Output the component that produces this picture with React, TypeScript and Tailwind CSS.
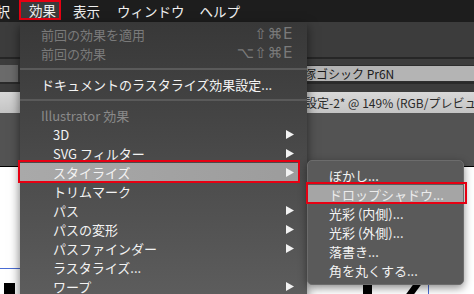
import React from "react";

type MenuItem =
  | { kind: "item"; label: string; shortcut?: string; disabled?: boolean; indent?: boolean; arrow?: boolean; active?: boolean }
  | { kind: "sep" }
  | { kind: "header"; label: string };

const effects: MenuItem[] = [
  { kind: "item", label: "前回の効果を適用", shortcut: "⇧⌘E", disabled: true },
  { kind: "item", label: "前回の効果", shortcut: "⌥⇧⌘E", disabled: true },
  { kind: "sep" },
  { kind: "item", label: "ドキュメントのラスタライズ効果設定..." },
  { kind: "sep" },
  { kind: "header", label: "Illustrator 効果" },
  { kind: "item", label: "3D", indent: true, arrow: true },
  { kind: "item", label: "SVG フィルター", indent: true, arrow: true },
  { kind: "item", label: "スタイライズ", indent: true, arrow: true, active: true },
  { kind: "item", label: "トリムマーク", indent: true },
  { kind: "item", label: "パス", indent: true, arrow: true },
  { kind: "item", label: "パスの変形", indent: true, arrow: true },
  { kind: "item", label: "パスファインダー", indent: true, arrow: true },
  { kind: "item", label: "ラスタライズ...", indent: true },
  { kind: "item", label: "ワープ", indent: true, arrow: true },
];

const stylize = ["ぼかし...", "ドロップシャドウ...", "光彩 (内側)...", "光彩 (外側)...", "落書き...", "角を丸くする..."];

const Arrow = () => (
  <svg width="8" height="9" viewBox="0 0 8 9" className="ml-auto shrink-0">
    <path d="M0 0L8 4.5L0 9Z" fill="#f2f2f2" />
  </svg>
);

const Row = ({ item }: { item: MenuItem }) => {
  if (item.kind === "sep") {
    return (
      <div className="h-[12px] flex items-center">
        <div className="h-[2px] w-full bg-[#5a5a5a]" />
      </div>
    );
  }
  if (item.kind === "header") {
    return <div className="h-[19px] leading-[19px] pl-[21px] text-[#8a8a8a]">{item.label}</div>;
  }
  const color = item.disabled ? "text-[#7a7a7a]" : "text-[#f3f3f3]";
  const pad = item.indent ? "pl-[33px]" : "pl-[21px]";
  const active = item.active
    ? "mr-[8px] pr-[5px] bg-linear-to-r from-[#a9a9a9] to-[#9c9c9c]"
    : "pr-[13px]";
  return (
    <div className={`flex items-center h-[19px] leading-[19px] whitespace-nowrap ${pad} ${active} ${color}`}>
      <span>{item.label}</span>
      {item.shortcut && (
        <span className="ml-auto pr-px font-['DejaVu_Sans',sans-serif] text-[15px] tracking-[0.5px]">{item.shortcut}</span>
      )}
      {item.arrow && <Arrow />}
    </div>
  );
};

export default function App() {
  return (
    <div className="relative flex flex-col w-[474px] h-[294px] overflow-hidden bg-white font-['Noto_Sans_CJK_JP','Noto_Sans',sans-serif]">
      {/* menu bar */}
      <div className="flex items-start h-[22px] shrink-0 bg-[#1d1d1d] text-[13.5px] leading-[22px] text-[#f0f0f0] whitespace-nowrap">
        <span className="ml-[-17px]">選択</span>
        <span className="ml-[9px] w-[42px] h-[20px] pl-[8px] border-2 border-[#e60012] bg-[#3b3b3b] leading-[16px]">効果</span>
        <span className="ml-[12px]">表示</span>
        <span className="ml-[17px]">ウィンドウ</span>
        <span className="ml-[15px]">ヘルプ</span>
      </div>

      {/* app panels behind the menu */}
      <div className="h-[35px] shrink-0 bg-[#3c3c3c]" />
      <div className="h-[2px] shrink-0 bg-[#262626]" />
      <div className="h-[6px] shrink-0 bg-[#3d3d3d]" />
      <div className="flex h-[17px] shrink-0 bg-[#3d3d3d]">
        <div className="w-[18px] bg-[#6b6b6b]" />
        <div className="flex-1 ml-[60px] pl-[214px] bg-[#b4b4b4] border-y border-[#2e2e2e] text-[12px] leading-[15px] text-[#1a1a1a] whitespace-nowrap">
          小塚ゴシック Pr6N
        </div>
      </div>
      <div className="h-[2px] shrink-0 bg-[#2a2a2a]" />
      <div className="h-[8px] shrink-0 bg-[#3c3c3c]" />
      <div className="h-[21px] shrink-0 pl-[269px] bg-linear-to-b from-[#d8d8d8] to-[#c4c4c4] text-[12px] leading-[21px] text-[#2a2a2a] whitespace-nowrap overflow-hidden">
        名称未設定-2* @ 149% (RGB/プレビュー)
      </div>
      <div className="h-[53px] shrink-0 bg-[#535353]" />
      <div className="h-px shrink-0 bg-black" />

      {/* artboard */}
      <div className="relative flex-1 bg-white">
        <div className="absolute left-0 top-[101px] w-[20px] h-px bg-[#4a6cd4]" />
        <div className="absolute left-[4px] top-[116px] w-[11px] h-[12px] bg-black" />
        <div className="absolute left-[428px] top-[111px] w-px h-[20px] bg-[#4a6cd4]" />
        <svg className="absolute left-[355px] top-[110px]" width="80" height="20" viewBox="0 0 80 20">
          <rect x="8" y="5" width="9" height="15" fill="#000" />
          <path d="M49 20L60 5H68L57 20Z" fill="#000" />
        </svg>
      </div>

      {/* effects menu */}
      <div className="absolute left-[20px] top-[22px] w-[287px] h-[290px] pt-[3px] bg-linear-to-b from-[#383838] to-[#5f5f5f] text-[13px] shadow-[0_4px_10px_rgba(0,0,0,0.55)]">
        {effects.map((item, i) => (
          <Row key={i} item={item} />
        ))}
      </div>

      {/* stylize submenu */}
      <div className="absolute left-[307px] top-[160px] w-[157px] pt-[5px] pb-[4px] rounded-[5px] bg-[#5a5a5a] border border-[#6c6c6c] text-[13px] shadow-[0_3px_8px_rgba(0,0,0,0.45)]">
        {stylize.map((label, i) => (
          <div
            key={label}
            className={`h-[19px] leading-[19px] pl-[21px] whitespace-nowrap ${
              i === 1 ? "bg-[#a5a5a5] text-[#ececec]" : "text-[#f3f3f3]"
            }`}
          >
            {label}
          </div>
        ))}
      </div>

      {/* red annotation boxes */}
      <div className="absolute left-[18px] top-[160px] w-[282px] h-[23px] border-2 border-[#e60012]" />
      <div className="absolute left-[306px] top-[182px] w-[161px] h-[22px] border-2 border-[#e60012]" />
    </div>
  );
}
